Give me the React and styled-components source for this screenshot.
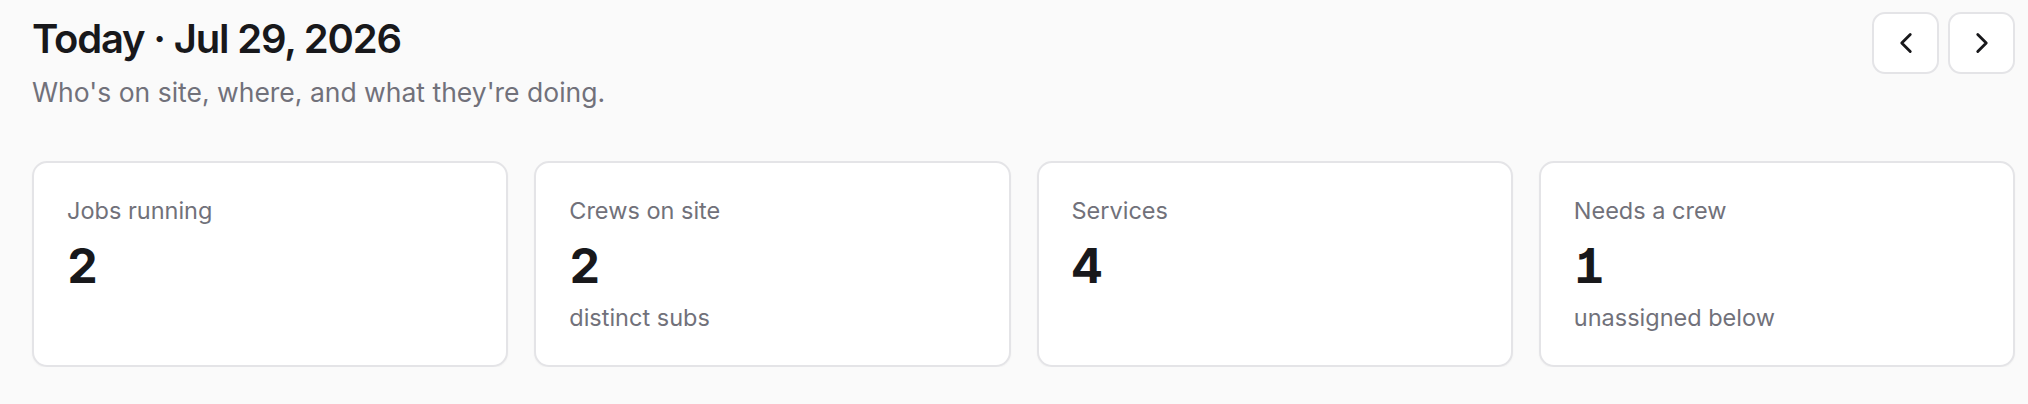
import React from 'react';
import styled, { createGlobalStyle } from 'styled-components';
import { ChevronLeft, ChevronRight } from 'lucide-react';

const GlobalStyle = createGlobalStyle`
  * { box-sizing: border-box; }
  html, body {
    margin: 0;
    padding: 0;
    background: #fafafa;
  }
  body {
    font-family: 'Inter', 'Liberation Sans', sans-serif;
    color: #18181b;
    -webkit-font-smoothing: antialiased;
  }
`;

const Page = styled.main`
  padding: 12px 13px 0 32px;
`;

const Header = styled.header`
  display: flex;
  justify-content: space-between;
  align-items: flex-start;
`;

const TitleBlock = styled.div`
  padding-top: 3px;
`;

const Title = styled.h1`
  margin: 0;
  font-size: 40px;
  line-height: 48px;
  font-weight: 600;
  letter-spacing: -0.03em;
  color: #18181b;
`;

const Subtitle = styled.p`
  margin: 12px 0 0;
  font-size: 26.5px;
  line-height: 34px;
  color: #71717a;
`;

const Pager = styled.div`
  display: flex;
  gap: 9px;
`;

const NavButton = styled.button`
  width: 67px;
  height: 62px;
  display: flex;
  align-items: center;
  justify-content: center;
  padding: 0;
  background: #fff;
  border: 2px solid #e4e4e7;
  border-radius: 13px;
  color: #18181b;
  cursor: pointer;
`;

const Stats = styled.section`
  display: grid;
  grid-template-columns: repeat(4, 1fr);
  gap: 26px;
  margin-top: 52px;
`;

const Card = styled.div`
  background: #fff;
  border: 2px solid #e4e4e7;
  border-radius: 15px;
  padding: 32px 33px 31px;
  box-shadow: 0 1px 2px rgba(0, 0, 0, 0.04);
`;

const Label = styled.div`
  font-size: 23.5px;
  line-height: 32px;
  color: #71717a;
`;

const Value = styled.div`
  margin-top: 10px;
  font-size: 48px;
  line-height: 58px;
  font-weight: 700;
  color: #18181b;
  font-feature-settings: 'cv01', 'tnum';
`;

const Note = styled.div`
  margin-top: 7px;
  font-size: 23.5px;
  line-height: 32px;
  color: #71717a;
`;

const stats = [
  { label: 'Jobs running', value: 2 },
  { label: 'Crews on site', value: 2, note: 'distinct subs' },
  { label: 'Services', value: 4 },
  { label: 'Needs a crew', value: 1, note: 'unassigned below' },
];

export default function App() {
  return (
    <>
      <GlobalStyle />
      <Page>
        <Header>
          <TitleBlock>
            <Title>Today · Jul 29, 2026</Title>
            <Subtitle>Who's on site, where, and what they're doing.</Subtitle>
          </TitleBlock>
          <Pager>
            <NavButton aria-label="Previous day">
              <ChevronLeft size={34} strokeWidth={2} />
            </NavButton>
            <NavButton aria-label="Next day">
              <ChevronRight size={34} strokeWidth={2} />
            </NavButton>
          </Pager>
        </Header>

        <Stats>
          {stats.map((s) => (
            <Card key={s.label}>
              <Label>{s.label}</Label>
              <Value>{s.value}</Value>
              {s.note && <Note>{s.note}</Note>}
            </Card>
          ))}
        </Stats>
      </Page>
    </>
  );
}
